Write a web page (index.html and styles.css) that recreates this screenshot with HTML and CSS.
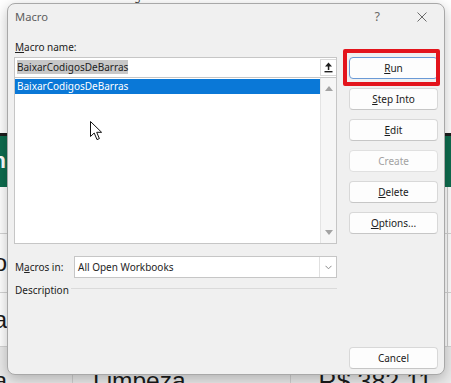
FILE: index.html
```html
<!DOCTYPE html>
<html lang="en">
<head>
  <meta charset="UTF-8">
  <title>Macro</title>
  <link rel="stylesheet" href="styles.css">
</head>
<body>
  <!-- planilha ao fundo -->
  <div class="sheet">
    <div class="sheet-ribbon">
      <span class="ribbon-label">Alignment</span>
      <span class="ribbon-label ribbon-number">Number</span>
    </div>
    <div class="sheet-head"><span class="head-text">n</span></div>
    <div class="sheet-row row-1"></div>
    <div class="sheet-row row-2"><span class="cell-a">o</span></div>
    <div class="sheet-row row-3"><span class="cell-a">a</span></div>
    <div class="sheet-row row-4">
      <span class="cell-a">a</span>
      <span class="cell-b">Limpeza</span>
      <span class="cell-c">R$ 382,11</span>
    </div>
  </div>

  <div class="dialog">
    <div class="titlebar">
      <span class="title">Macro</span>
      <span class="tb-help">?</span>
      <svg class="tb-close" width="10" height="10" viewBox="0 0 10 10">
        <line x1="0.5" y1="0.5" x2="9.5" y2="9.5" stroke="#6a6a6a" stroke-width="1"/>
        <line x1="9.5" y1="0.5" x2="0.5" y2="9.5" stroke="#6a6a6a" stroke-width="1"/>
      </svg>
    </div>

    <div class="dialog-body">
      <div class="main-col">
        <label class="lbl"><u>M</u>acro name:</label>
        <div class="name-box">
          <div class="name-input"><span class="sel-text">BaixarCodigosDeBarras</span></div>
          <div class="up-btn">
            <svg width="9" height="11" viewBox="0 0 9 11">
              <polygon points="4.5,0.5 8,4.5 1,4.5" fill="#1e1e1e"/>
              <rect x="3.8" y="4" width="1.5" height="4" fill="#1e1e1e"/>
              <rect x="0.5" y="9" width="8" height="1.4" fill="#1e1e1e"/>
            </svg>
          </div>
        </div>
        <div class="macro-list">
          <div class="list-items">
            <div class="list-item selected">BaixarCodigosDeBarras</div>
          </div>
          <div class="scrollbar">
            <svg width="8" height="5" viewBox="0 0 8 5"><polygon points="4,0 8,5 0,5" fill="#a3a3a3"/></svg>
            <svg width="8" height="5" viewBox="0 0 8 5"><polygon points="0,0 8,0 4,5" fill="#a3a3a3"/></svg>
          </div>
        </div>
        <div class="macros-in">
          <label class="lbl-in">M<u>a</u>cros in:</label>
          <div class="select">
            <span class="select-text">All Open Workbooks</span>
            <span class="select-arrow">
              <svg width="7" height="5" viewBox="0 0 7 5"><polyline points="0.5,0.8 3.5,3.8 6.5,0.8" fill="none" stroke="#8a8a8a" stroke-width="1"/></svg>
            </span>
          </div>
        </div>
        <div class="desc">
          <span>Description</span>
          <span class="desc-line"></span>
        </div>
      </div>

      <div class="btn-col">
        <button class="btn btn-default"><u>R</u>un</button>
        <button class="btn"><u>S</u>tep Into</button>
        <button class="btn"><u>E</u>dit</button>
        <button class="btn btn-disabled">Create</button>
        <button class="btn"><u>D</u>elete</button>
        <button class="btn"><u>O</u>ptions...</button>
        <button class="btn btn-cancel">Cancel</button>
      </div>
    </div>

    <div class="highlight-box"></div>
    <svg class="cursor" width="13" height="20" viewBox="0 0 13 20">
      <path d="M0.5 0.5 L0.5 15.5 L4.2 12 L7 18.6 L9.4 17.6 L6.7 11.3 L11.6 11.3 Z" fill="#fff" stroke="#111" stroke-width="1" stroke-linejoin="round"/>
    </svg>
  </div>
</body>
</html>
```

FILE: styles.css
```css
* {
  box-sizing: border-box;
}

body {
  margin: 0;
  width: 451px;
  height: 383px;
  overflow: hidden;
  position: relative;
  background: #fff;
  font-family: "Noto Sans", "Open Sans", sans-serif;
  font-size: 10px;
  color: #222;
}

/* planilha */
.sheet {
  display: flex;
  flex-direction: column;
  height: 383px;
  font-family: "Liberation Sans", Arial, sans-serif;
}

.sheet-ribbon {
  height: 133px;
  display: flex;
  align-items: flex-start;
  padding-left: 122px;
  overflow: hidden;
}

.ribbon-label {
  font-family: "Noto Sans", sans-serif;
  font-size: 10.5px;
  color: #444;
  line-height: 12px;
  margin-top: -10px;
}

.ribbon-number {
  margin-left: 187px;
}

.sheet-head {
  height: 54px;
  border-top: 3px solid #1c1c1c;
  background: #0e6c4e;
  overflow: hidden;
}

.head-text {
  display: block;
  width: 6px;
  overflow: hidden;
  direction: rtl;
  color: #fff;
  font-weight: bold;
  font-size: 22px;
  line-height: 30px;
  margin-top: 10px;
}

.sheet-row {
  display: flex;
  align-items: center;
  border-bottom: 1px solid #d4d4d4;
  background: linear-gradient(90deg, transparent 447px, #cfcfcf 447px, #cfcfcf 448px, transparent 448px);
  overflow: hidden;
}

.row-1 { height: 47px; }
.row-2 { height: 59px; }
.row-3 { height: 54px; }
.row-4 {
  flex: 1;
  border-bottom: 0;
  align-items: flex-start;
  background:
    linear-gradient(90deg, transparent 72px, #cfcfcf 72px, #cfcfcf 73px, transparent 73px, transparent 290px, #cfcfcf 290px, #cfcfcf 291px, transparent 291px),
    #eaeaea;
}

.cell-a {
  width: 7px;
  font-size: 24px;
  line-height: 28px;
  color: #1b1b1b;
  text-align: right;
  overflow: hidden;
  white-space: nowrap;
  direction: rtl;
}

.row-4 .cell-a,
.row-4 .cell-b,
.row-4 .cell-c {
  margin-top: 20px;
  font-size: 24px;
  line-height: 28px;
  color: #1b1b1b;
}

.row-4 .cell-b {
  margin-left: 86px;
  font-size: 24.5px;
}

.row-4 .cell-c {
  margin-left: 133px;
  font-size: 25px;
}

/* caixa de dialogo */
.dialog {
  position: absolute;
  left: 7px;
  top: 3px;
  width: 438px;
  height: 372px;
  background: #f0f0f0;
  border: 1px solid #a8a8a8;
  border-radius: 8px;
  box-shadow: 0 4px 14px rgba(0,0,0,0.25);
  display: flex;
  flex-direction: column;
}

.titlebar {
  height: 36px;
  display: flex;
  align-items: flex-start;
  padding: 5px 17px 0 7px;
}

.title {
  font-size: 11.2px;
  line-height: 16px;
  color: #5e5e5e;
}

.tb-help {
  margin-left: auto;
  margin-right: 37px;
  font-size: 12.5px;
  line-height: 16px;
  color: #6a6a6a;
}

.tb-close {
  margin-top: 3px;
}

.dialog-body {
  flex: 1;
  display: flex;
  gap: 12px;
  padding: 0 6px 5px 6px;
}

.main-col {
  width: 323px;
  display: flex;
  flex-direction: column;
}

.lbl {
  line-height: 14px;
  padding-left: 1px;
  margin-bottom: 3px;
}

.name-box {
  height: 21px;
  border: 1px solid #c6c6c6;
  background: #fff;
  display: flex;
}

.name-input {
  flex: 1;
  padding: 2px 0 0 2px;
}

.sel-text {
  display: inline-block;
  height: 14px;
  line-height: 14px;
  background: #c8c8c8;
  color: #1e1e1e;
}

.up-btn {
  width: 16px;
  margin: 1px 0;
  border: 1px solid #dadada;
  border-right: 0;
  background: #fff;
  display: flex;
  align-items: center;
  justify-content: center;
}

.macro-list {
  height: 166px;
  border: 1px solid #c6c6c6;
  border-top: 0;
  background: #fff;
  display: flex;
}

.list-items {
  flex: 1;
  padding-top: 1px;
}

.list-item {
  height: 15px;
  line-height: 15px;
  padding-left: 2px;
}

.list-item.selected {
  background: #0a78d7;
  color: #fff;
}

.scrollbar {
  width: 16px;
  border-left: 1px solid #e4e4e4;
  background: #f6f6f6;
  display: flex;
  flex-direction: column;
  justify-content: space-between;
  align-items: center;
  padding: 8px 0 8px;
}

.macros-in {
  display: flex;
  align-items: center;
  margin-top: 12px;
  height: 22px;
}

.lbl-in {
  width: 60px;
  padding-left: 1px;
}

.select {
  flex: 1;
  height: 22px;
  border: 1px solid #c6c6c6;
  background: #fff;
  display: flex;
  align-items: center;
}

.select-text {
  flex: 1;
  padding-left: 3px;
  color: #1e1e1e;
}

.select-arrow {
  width: 17px;
  height: 100%;
  border-left: 1px solid #e0e0e0;
  display: flex;
  align-items: center;
  justify-content: center;
}

.desc {
  display: flex;
  margin-top: 5px;
  line-height: 14px;
  padding-left: 1px;
}

.desc-line {
  flex: 1;
  height: 1px;
  margin: 5px 0 0 2px;
  background: #dadada;
}

.btn-col {
  width: 89px;
  display: flex;
  flex-direction: column;
  gap: 9px;
  padding-top: 17px;
}

.btn {
  height: 22px;
  padding: 0;
  border: 1px solid #d8d8d8;
  border-bottom-color: #c6c6c6;
  border-radius: 4px;
  background: #fdfdfd;
  font-family: inherit;
  font-size: 10px;
  color: #1b1b1b;
}

.btn-default {
  border: 1px solid #6a9ad6;
}

.btn-disabled {
  color: #a2a2a2;
  border-color: #e0e0e0;
}

.btn-cancel {
  margin-top: auto;
}

/* marcacao vermelha do tutorial */
.highlight-box {
  position: absolute;
  left: 335px;
  top: 45px;
  width: 97px;
  height: 37px;
  border: 4px solid #e3141c;
  border-radius: 2px;
}

.cursor {
  position: absolute;
  left: 82px;
  top: 117px;
}
```
